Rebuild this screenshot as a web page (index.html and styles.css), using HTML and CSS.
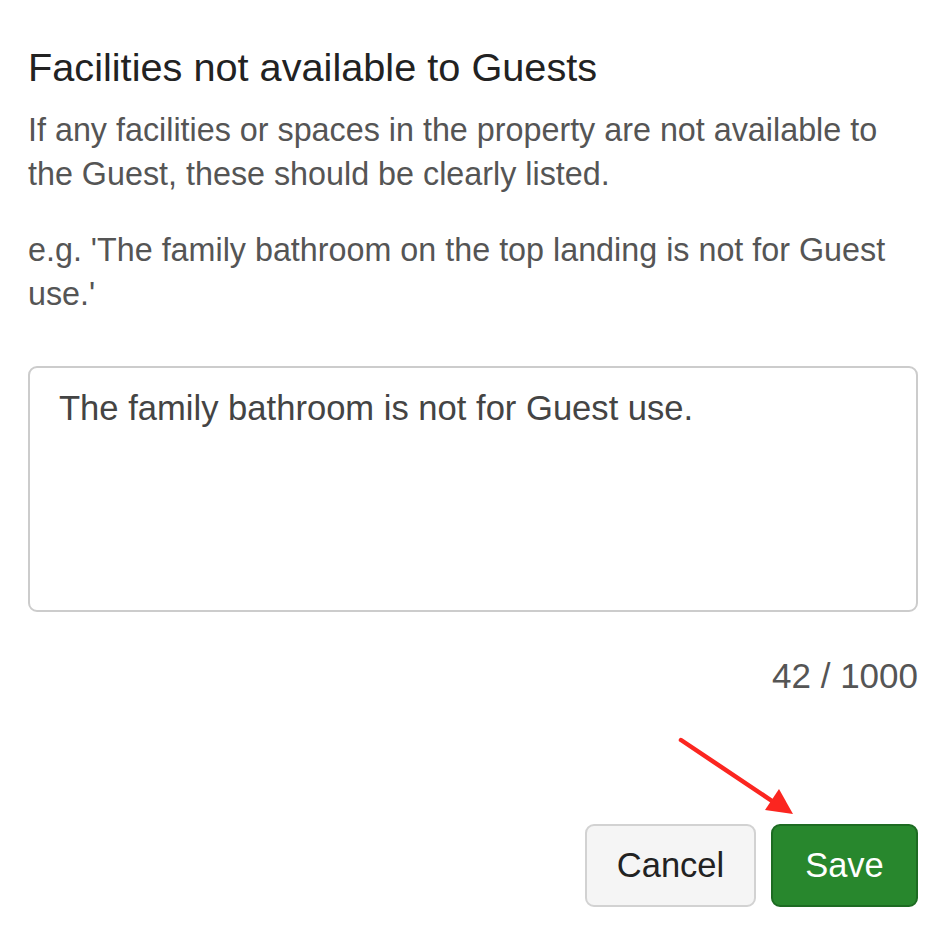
FILE: index.html
```html
<!DOCTYPE html>
<html>
<head>
<meta charset="utf-8">
<link rel="stylesheet" href="styles.css">
</head>
<body>
<div class="page">
  <h2 class="title">Facilities not available to Guests</h2>
  <p class="desc">If any facilities or spaces in the property are not available to the Guest, these should be clearly listed.</p>
  <p class="desc">e.g. 'The family bathroom on the top landing is not for Guest use.'</p>
  <div class="field">The family bathroom is not for Guest use.</div>
  <div class="counter">42 / 1000</div>
  <div class="actions">
    <button class="btn btn-cancel">Cancel</button>
    <button class="btn btn-save">Save</button>
  </div>
</div>
<svg class="arrow" width="948" height="934" viewBox="0 0 948 934">
  <line x1="681" y1="740" x2="775" y2="803" stroke="#fb2620" stroke-width="4.5" stroke-linecap="round"/>
  <polygon points="793,814 765,810 779,789" fill="#fb2620"/>
</svg>
</body>
</html>
```
FILE: styles.css
```css
html, body {
  margin: 0;
  padding: 0;
  background: #ffffff;
}
body {
  font-family: "Liberation Sans", Arial, sans-serif;
  position: relative;
  width: 948px;
  height: 934px;
  overflow: hidden;
}
.page {
  padding: 43px 30px 0 28px;
}
.title {
  margin: 0 0 17px 0;
  font-size: 39.7px;
  font-weight: normal;
  line-height: 48px;
  color: #222222;
}
.desc {
  margin: 0 0 32px 0;
  font-size: 32.3px;
  line-height: 44px;
  color: #555555;
}
.desc:last-of-type {
  margin-bottom: 50px;
}
.field {
  height: 246px;
  box-sizing: border-box;
  border: 2px solid #cccccc;
  border-radius: 9px;
  padding: 18px 29px;
  font-size: 34.6px;
  line-height: 44px;
  color: #444444;
}
.counter {
  margin-top: 42px;
  text-align: right;
  font-size: 35px;
  line-height: 44px;
  color: #555555;
}
.actions {
  margin-top: 126px;
  display: flex;
  justify-content: flex-end;
  gap: 15px;
}
.btn {
  height: 83px;
  box-sizing: border-box;
  border-radius: 9px;
  font-family: "Liberation Sans", Arial, sans-serif;
  font-size: 34.5px;
  padding: 0;
  cursor: pointer;
}
.btn-cancel {
  width: 171px;
  background: #f5f5f5;
  border: 2px solid #d2d2d2;
  color: #222222;
}
.btn-save {
  width: 147px;
  background: #28872d;
  border: 2px solid #1d6b22;
  color: #ffffff;
}
.arrow {
  position: absolute;
  left: 0;
  top: 0;
  pointer-events: none;
}
```
